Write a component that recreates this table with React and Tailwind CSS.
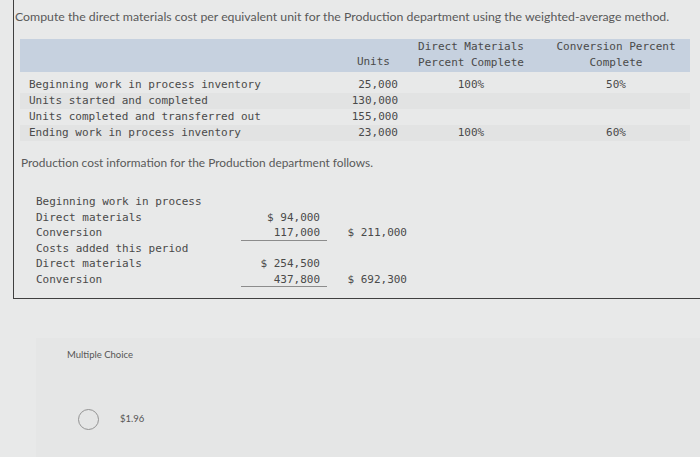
import React from 'react';

const units = [
  { label: 'Beginning work in process inventory', units: '25,000', dm: '100%', conv: '50%' },
  { label: 'Units started and completed', units: '130,000', dm: '', conv: '' },
  { label: 'Units completed and transferred out', units: '155,000', dm: '', conv: '' },
  { label: 'Ending work in process inventory', units: '23,000', dm: '100%', conv: '60%' },
];

const costs = [
  { label: 'Beginning work in process', a: '', b: '', line: false },
  { label: 'Direct materials', a: '$ 94,000', b: '', line: false },
  { label: 'Conversion', a: '117,000', b: '$ 211,000', line: true },
  { label: 'Costs added this period', a: '', b: '', line: false },
  { label: 'Direct materials', a: '$ 254,500', b: '', line: false },
  { label: 'Conversion', a: '437,800', b: '$ 692,300', line: true },
];

const mono = "font-['DejaVu_Sans_Mono','Liberation_Mono',monospace]";

const App = () => {
  return (
    <div className="w-[700px] h-[457px] overflow-hidden bg-[#e8e9e9] font-['Lato','Open_Sans',sans-serif] text-[#555]">
      {/* question box */}
      <div className="ml-[13px] h-[299px] border-l border-b border-[#3f3f3f]">
        <p className="pt-[9px] pl-[1px] text-[12.3px] leading-[16px] text-[#595959] whitespace-nowrap">
          Compute the direct materials cost per equivalent unit for the Production department using the weighted-average method.
        </p>

        <div className={`ml-[6px] w-[670px] ${mono} text-[11px] text-[#4a4a4a]`}>
          <div className="mt-[14px] grid h-[33px] grid-cols-[320px_60px_142px_148px] bg-[#c6d1df] leading-[16px]">
            <div />
            <div className="flex items-end justify-end pr-[10px] pb-[2px]">Units</div>
            <div className="text-center">
              <div>Direct Materials</div>
              <div>Percent Complete</div>
            </div>
            <div className="text-center">
              <div>Conversion Percent</div>
              <div>Complete</div>
            </div>
          </div>

          <div className="mt-[5px]">
            {units.map((r, i) => (
              <div
                key={i}
                className={`grid h-[16px] grid-cols-[320px_60px_142px_148px] leading-[16px] ${i % 2 === 1 ? 'bg-[#e2e3e3]' : ''}`}
              >
                <div className="pl-[9px]">{r.label}</div>
                <div className="pr-[2px] text-right">{r.units}</div>
                <div className="text-center">{r.dm}</div>
                <div className="text-center">{r.conv}</div>
              </div>
            ))}
          </div>
        </div>

        <p className="mt-[15px] pl-[7px] text-[11.9px] leading-[14px] text-[#595959] whitespace-nowrap">
          Production cost information for the Production department follows.
        </p>

        <div className={`mt-[24px] pl-[22px] ${mono} text-[11px] text-[#4a4a4a]`}>
          {costs.map((r, i) => (
            <div key={i} className="flex h-[15.5px] leading-[15.5px]">
              <div className="w-[205px]">{r.label}</div>
              <div className={`w-[86px] pr-[7px] text-right ${r.line ? 'border-b border-[#8c8c8c]' : ''}`}>{r.a}</div>
              <div className="w-[82px] pr-[2px] text-right">{r.b}</div>
            </div>
          ))}
        </div>
      </div>

      {/* answer panel */}
      <div className="mt-[39px] ml-[36px] h-[120px] bg-[#e5e6e6] pl-[31px] pt-[10px]">
        <div className="text-[9.5px] leading-[14px] text-[#555]">Multiple Choice</div>
        <div className="mt-[47px] ml-[11px] flex items-center gap-[21px]">
          <div className="h-[21px] w-[21px] rounded-full border-[1.5px] border-[#939393]" />
          <span className="text-[9.5px] text-[#555]">$1.96</span>
        </div>
      </div>
    </div>
  );
};

export default App;
